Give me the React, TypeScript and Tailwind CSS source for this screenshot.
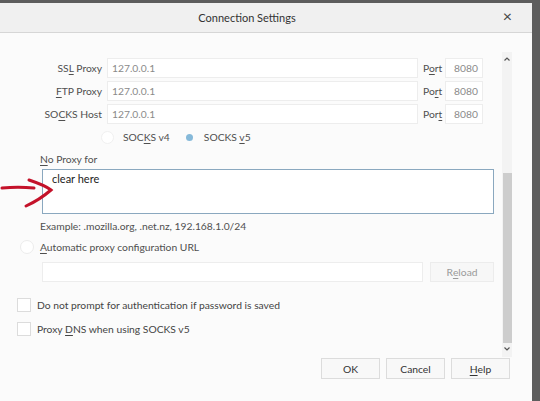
import React from "react";

const font = { fontFamily: 'Lato, "Noto Sans", sans-serif' };

function Key({ children }: { children: React.ReactNode }) {
  return <span className="underline underline-offset-2 decoration-1">{children}</span>;
}

function ProxyRow({ label, port }: { label: React.ReactNode; port: React.ReactNode }) {
  return (
    <div className="flex items-center h-[20px]">
      <div className="w-[102px] text-right text-[#4f4f4f]">{label}</div>
      <div className="ml-[5px] w-[311px] h-[20px] bg-white border border-[#ededed] flex items-center pl-[4px] text-[#8a8a8a]">
        127.0.0.1
      </div>
      <div className="ml-[5px] w-[18px] text-[#4f4f4f]">{port}</div>
      <div className="ml-[4px] w-[38px] h-[20px] bg-white border border-[#ededed] flex items-center justify-end pr-[4px] text-[#8a8a8a]">
        8080
      </div>
    </div>
  );
}

function Checkbox({ label }: { label: React.ReactNode }) {
  return (
    <div className="flex items-center h-[14px]">
      <div className="ml-[17px] w-[14px] h-[14px] bg-white border border-[#dcdcdc]" />
      <div className="ml-[6px] text-[#444]">{label}</div>
    </div>
  );
}

export default function App() {
  return (
    <div
      className="relative w-[540px] h-[401px] bg-[#5d5d5d] pt-[3px] pr-[8px] flex text-[10.3px] leading-[16px]"
      style={font}
    >
      <div className="flex-1 flex flex-col bg-[#fbfbfb]">
        <div className="relative h-[30px] bg-[#f0f0f0] border-b border-[#d6d6d6] flex items-center justify-center pr-[38px] text-[11px] text-[#333]">
          Connection Settings
          <span className="absolute right-[20px] top-[5px] text-[16px] leading-[16px] text-[#444]">×</span>
        </div>

        <div className="flex h-[325px]">
          <div className="w-[502px] flex flex-col">
            <div className="mt-[25px] flex flex-col gap-[3px]">
              <ProxyRow label={<>SS<Key>L</Key> Proxy</>} port={<>P<Key>o</Key>rt</>} />
              <ProxyRow label={<><Key>F</Key>TP Proxy</>} port={<>Po<Key>r</Key>t</>} />
              <ProxyRow label={<>SO<Key>C</Key>KS Host</>} port={<>Por<Key>t</Key></>} />
            </div>

            <div className="mt-[4px] h-[18px] flex items-center text-[#4f4f4f]">
              <div className="ml-[101px] w-[13px] h-[13px] rounded-full bg-white border border-[#f0f0f0]" />
              <div className="ml-[9px]">SOC<Key>K</Key>S v4</div>
              <div className="ml-[13px] w-[13px] h-[13px] flex items-center justify-center">
                <div className="w-[7px] h-[7px] rounded-full bg-[#86b9d9]" />
              </div>
              <div className="ml-[8px]">SOCKS <Key>v</Key>5</div>
            </div>

            <div className="mt-[5px] ml-[40px] text-[#4f4f4f]">
              <Key>N</Key>o Proxy for
            </div>
            <div className="mt-[2px] ml-[42px] w-[452px] h-[45px] bg-white border border-[#8aa8bf] pl-[9px] pt-[1px] text-[11px] text-[#222]">
              clear here
            </div>

            <div className="mt-[4px] ml-[40px] text-[#4f4f4f]">
              Example: .mozilla.org, .net.nz, 192.168.1.0/24
            </div>

            <div className="mt-[5px] h-[16px] flex items-center text-[#4f4f4f]">
              <div className="ml-[20px] w-[14px] h-[14px] rounded-full bg-white border border-[#ececec]" />
              <div className="ml-[6px]">
                <Key>A</Key>utomatic proxy configuration URL
              </div>
            </div>

            <div className="mt-[7px] flex items-center">
              <div className="ml-[42px] w-[381px] h-[20px] bg-white border border-[#ededed]" />
              <div className="ml-[7px] w-[64px] h-[20px] bg-[#f7f7f7] border border-[#ececec] flex items-center justify-center text-[#9a9a9a]">
                R<Key>e</Key>load
              </div>
            </div>

            <div className="mt-[16px]">
              <Checkbox label={<>Do not prompt for authent<Key>i</Key>cation if password is saved</>} />
            </div>
            <div className="mt-[10px]">
              <Checkbox label={<>Proxy <Key>D</Key>NS when using SOCKS v5</>} />
            </div>
          </div>

          <div className="mt-[19px] w-[10px] h-[305px] bg-[#f3f3f3] flex flex-col items-center">
            <svg width="8" height="6" viewBox="0 0 8 6" className="mt-[4px]">
              <path d="M1.5 4.5 L4 2 L6.5 4.5" fill="none" stroke="#555" strokeWidth="1.2" />
            </svg>
            <div className="mt-[111px] w-[9px] h-[170px] bg-[#cdcdcd]" />
            <svg width="8" height="6" viewBox="0 0 8 6" className="mt-[3px]">
              <path d="M1.5 1.5 L4 4 L6.5 1.5" fill="none" stroke="#555" strokeWidth="1.2" />
            </svg>
          </div>
        </div>

        <div className="flex justify-end gap-[6px] pr-[22px] text-[#333]">
          <div className="w-[59px] h-[21px] bg-[#f8f8f8] border border-[#dcdcdc] flex items-center justify-center">OK</div>
          <div className="w-[59px] h-[21px] bg-[#f8f8f8] border border-[#dcdcdc] flex items-center justify-center">Cancel</div>
          <div className="w-[59px] h-[21px] bg-[#f8f8f8] border border-[#dcdcdc] flex items-center justify-center">
            <Key>H</Key>elp
          </div>
        </div>
      </div>

      <svg className="absolute left-0 top-[172px]" width="56" height="40" viewBox="0 0 56 40">
        <path d="M2 16 C12 15 24 15 34 16" fill="none" stroke="#c4122a" strokeWidth="3" strokeLinecap="round" />
        <path d="M29 8 C38 11 46 14 51 18 C44 24 35 30 26 34" fill="none" stroke="#c4122a" strokeWidth="3" strokeLinecap="round" />
      </svg>
    </div>
  );
}
